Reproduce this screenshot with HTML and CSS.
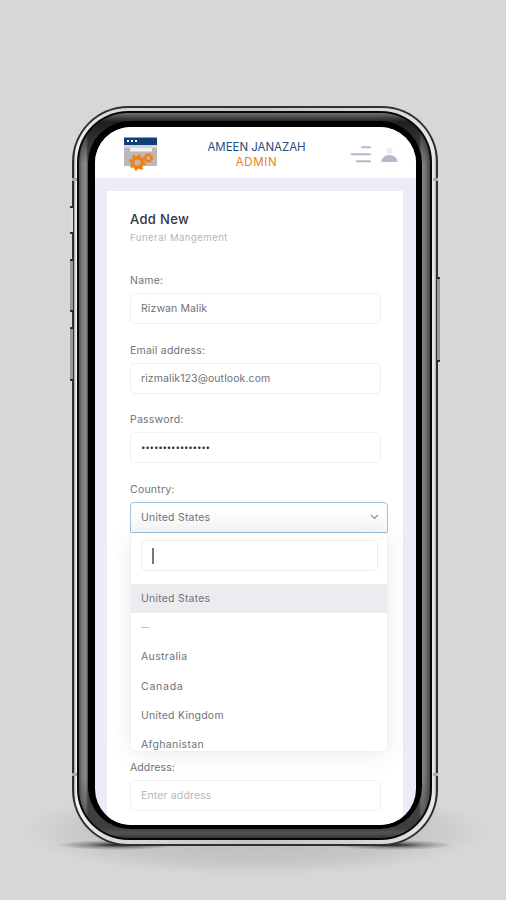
FILE: index.html
```html
<!DOCTYPE html>
<html lang="en">
<head>
<meta charset="utf-8">
<title>Ameen Janazah Admin</title>
<link rel="stylesheet" href="styles.css">
</head>
<body>
<div class="device">
  <i class="haze"></i>
  <i class="ground left"></i><i class="ground right"></i>
  <i class="key mute"></i><i class="key up"></i><i class="key down"></i><i class="key power"></i>
  <div class="rim"><div class="steel"><div class="edge"><div class="bezel"><div class="glass">
    <main class="screen">
      <header class="topbar">
        <svg class="logo" width="36" height="36" viewBox="0 0 36 36">
          <path fill="#123f75" d="M1 1.500h33V9H1z"/>
          <path fill="#fff" d="M4 4h2v2H4zM8 4h2v2H8zM12 4h2v2h-2z"/>
          <path fill="#d5d5d7" d="M1 9h33v3H1z"/>
          <path fill="#b9b9bb" d="M1 12h33v18H1z"/>
          <path fill="#f1f1f2" d="M7 12h22v3.500H7z"/>
          <circle cx="14.500" cy="26.500" r="4.800" fill="none" stroke="#ef8016" stroke-width="3.600"/>
          <circle cx="14.500" cy="26.500" r="7.200" fill="none" stroke="#ef8016" stroke-width="2.200" stroke-dasharray="2.900 2.755"/>
          <circle cx="25.300" cy="22" r="3" fill="none" stroke="#ef8016" stroke-width="2"/>
          <circle cx="25.300" cy="22" r="4.200" fill="none" stroke="#ef8016" stroke-width="1.600" stroke-dasharray="1.700 1.600"/>
        </svg>
        <div class="brand"><span class="brand-name">AMEEN JANAZAH</span><span class="brand-role">ADMIN</span></div>
        <svg class="tools" width="50" height="20" viewBox="0 0 50 20">
          <path d="M12 3.300h8M1.500 10.300h18.500M7 17.300h13" stroke="#b9b7cb" stroke-width="2" stroke-linecap="round"/>
          <circle cx="39.500" cy="7" r="3" fill="#ebebee"/>
          <path d="M31.500 18c0-4 3.500-7 8-7s8 3 8 7z" fill="#b9b7cb"/>
        </svg>
      </header>
      <section class="card">
        <h1>Add New</h1>
        <p class="sub">Funeral Mangement</p>
        <div class="field"><label>Name:</label><div class="input tight">Rizwan Malik</div></div>
        <div class="field"><label>Email address:</label><div class="input tight">rizmalik123@outlook.com</div></div>
        <div class="field"><label>Password:</label><div class="input dots">••••••••••••••••</div></div>
        <div class="field country">
          <label>Country:</label>
          <div class="input select"><span>United States</span>
            <svg width="9" height="6" viewBox="0 0 9 6"><path d="M1 1l3.500 3.500L8 1" fill="none" stroke="#939393" stroke-width="1.200"/></svg>
          </div>
          <div class="menu">
            <div class="search"><i class="caret"></i></div>
            <ul>
              <li class="active">United States</li>
              <li class="dash">—</li>
              <li class="wide">Australia</li>
              <li class="wider">Canada</li>
              <li>United Kingdom</li>
              <li class="wide">Afghanistan</li>
            </ul>
          </div>
        </div>
        <div class="field"><label class="tight">Address:</label><div class="input placeholder">Enter address</div></div>
      </section>
    </main>
  </div></div></div></div></div>
  <i class="band tl"></i><i class="band tr"></i><i class="band bl"></i><i class="band br"></i>
</div>
</body>
</html>
```
FILE: styles.css
```css
* { box-sizing: border-box; }
body {
  margin: 0;
  height: 900px;
  padding: 106px 0 0 72px;
  overflow: hidden;
  background: #d7d7d7;
  font: 10.5px/20px Inter, "Open Sans", sans-serif;
  letter-spacing: .22px;
  color: #727276;
}
i { display: block; }

/* Phone shell, from the outer rim to the screen */
.device { position: relative; width: 366px; height: 740px; }
.rim, .steel, .edge, .bezel, .glass { height: 100%; }
.rim { position: relative; border-radius: 56px; padding: 1.5px 2px 2px; background: #303030; }
.steel { border-radius: 54px; padding: 3px 4px 4px 3px; background: linear-gradient(90deg, #999, #f2f2f2 2px, #dcdcdc 30px, #c4c4c4 50%, #dcdcdc 330px, #e8e8e8 360px, #aaa); }
.edge { border-radius: 51px; padding: 2px; background: #080808; }
.bezel {
  border-radius: 49px;
  padding: 8px 8px 9px 9px;
  background:
    linear-gradient(#707070, #404040 5px, #202020 9px, rgba(32, 32, 32, 0) 50px, rgba(32, 32, 32, 0) 665px, rgba(60, 60, 60, .8) 715px, #555 720px, #333 725px, #151515),
    linear-gradient(90deg, #505050, #7c7c7c 3px, #8c8c8c 7px, #444 9px, #444 340px, #888 342px, #777 346px, #444);
}
.glass { border-radius: 42px; padding: 6.5px 6px 4px 7px; background: #000; }
.screen {
  height: 698px;
  overflow: hidden;
  border-radius: 36px;
  background: #ebecf7;
}

/* Header */
.topbar { height: 51px; display: flex; align-items: flex-start; background: #fff; padding-left: 28px; }
.logo { margin-top: 9px; flex: none; }
.brand { width: 136px; margin: 13px 0 0 29.5px; display: flex; flex-direction: column; align-items: center; line-height: 14.5px; font-size: 11.5px; white-space: nowrap; }
.brand-name { color: #244f80; letter-spacing: -.03px; }
.brand-role { color: #ee7e1b; letter-spacing: .6px; }
.tools { margin: 17px 0 0 25.5px; flex: none; }

/* Form */
.card { margin: 13px 13px 0 12px; height: 650px; padding: 18px 22px 0 23px; background: #fff; }
h1 { margin: 0; font-size: 13px; line-height: 20px; font-weight: 500; letter-spacing: .35px; color: #34343d; }
.sub { margin: 0 0 23px; line-height: 18px; height: 18px; font-size: 9.5px; color: #b5b5b8; letter-spacing: .5px; }
.field { height: 54px; margin-bottom: 15.6px; }
label { display: block; height: 20px; line-height: 22px; margin-bottom: 3px; }
.tight { letter-spacing: .1px; }
.input { width: 251px; height: 31px; line-height: 29px; padding-left: 10px; border: 1px solid #f0f0f1; border-radius: 5px; white-space: nowrap; background: #fff; }
.dots { color: #333; font-size: 8px; letter-spacing: -.2px; }
.country { position: relative; margin-bottom: 224px; }
.select { width: 258px; display: flex; justify-content: space-between; align-items: center; padding-right: 8px; border-color: #9cc4e8; border-radius: 4px 4px 1px 1px; background: linear-gradient(#fff, #f8f8f9); }
.menu {
  position: absolute;
  top: 54px;
  left: 1px;
  width: 256px;
  height: 218px;
  overflow: hidden;
  padding-top: 7px;
  border-radius: 0 0 4px 4px;
  background: #fff;
}
.country::after { content: ""; position: absolute; top: 54px; left: 1px; width: 256px; height: 218px; border-radius: 4px; box-shadow: 0 2px 24px rgba(60, 60, 90, .1), 0 0 2px rgba(60, 60, 90, .1); pointer-events: none; }
.search { width: 237px; height: 31px; margin: 0 0 13px 10px; padding: 7px 0 0 10px; border: 1px solid #ececee; border-radius: 5px; }
.caret { width: 1.5px; height: 16px; background: #777; }
ul { list-style: none; margin: 0; padding: 0; }
li { height: 29.3px; line-height: 29.3px; padding-left: 10px; }
.active { background: #ebecf0; }
.dash { font-size: 8px; color: #aaa; }
.wide { letter-spacing: .35px; }
.wider { letter-spacing: .75px; }
.placeholder { color: #b8b8bb; background: transparent; letter-spacing: .15px; }

/* Side keys, antenna bands and ground shadow */
.key { position: absolute; width: 3px; left: -2px; background: #999; border-top: 2px solid #222; border-bottom: 2px solid #222; border-radius: 1px; z-index: 1; }
.mute { top: 100px; height: 28px; background: #ddd; }
.up { top: 153px; height: 53px; }
.down { top: 221px; height: 54px; }
.power { top: 171px; height: 85px; left: 365px; }
.band { position: absolute; width: 5px; height: 3px; background: #aaa; }
.tl { left: 0; top: 72px; }
.tr { right: 0; top: 72px; }
.bl { left: 0; top: 667px; }
.br { right: 0; top: 667px; }
.ground { position: absolute; top: 734px; width: 120px; height: 10px; background: radial-gradient(closest-side, rgba(0, 0, 0, .85), rgba(0, 0, 0, .3) 50%, transparent); }
.left { left: -15px; }
.right { right: -15px; }
.haze { position: absolute; left: -50px; top: 680px; width: 466px; height: 90px; background: radial-gradient(closest-side, rgba(0, 0, 0, .14), rgba(0, 0, 0, .08) 70%, transparent); }
```
